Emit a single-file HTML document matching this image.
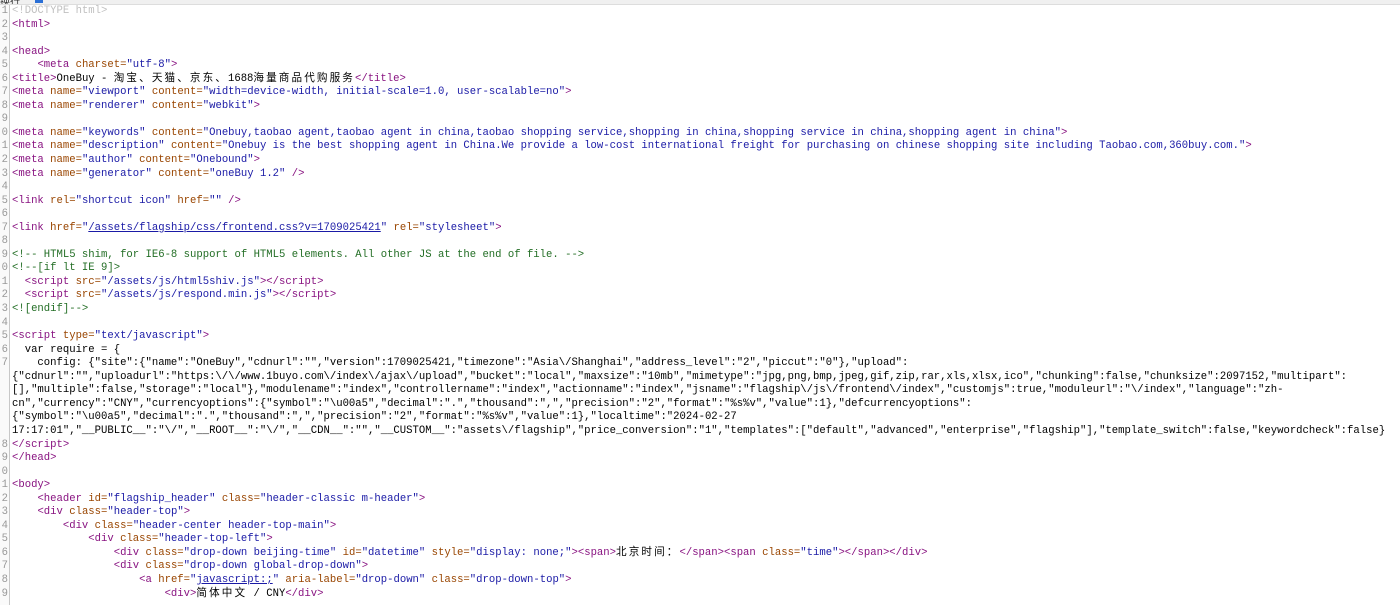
<!DOCTYPE html>
<html><head><meta charset="utf-8">
<style>
html,body{margin:0;padding:0;background:#fff;width:1400px;height:592px;overflow:hidden}
.top{position:absolute;left:0;top:0;width:1400px;height:4px;background:#f0f0f0;border-bottom:1px solid #ddd;overflow:hidden}
.top .tx{position:absolute;left:0;top:-7px;font:10px "Noto Sans CJK SC",sans-serif;color:#333}
.top .cb{position:absolute;left:35px;top:0;width:8px;height:3px;background:#2a6fd6}
.gut{position:absolute;left:0;top:5px;width:9px;height:600px;border-right:1px solid #c8c8c8;background:#fafafa}
.g{font:10.6px/13.55px "Liberation Mono",monospace;color:#999;text-align:right;width:8px;overflow:hidden;white-space:nowrap;direction:rtl}
pre{position:absolute;left:12px;top:5px;margin:0;font:10.6px/13.55px "Liberation Mono","Noto Sans CJK SC",monospace;color:#000;white-space:pre}
.t{color:#881280}.a{color:#994500}.v{color:#1a1aa6}.c{color:#236e25}.d{color:#c0c0c0}
.u{text-decoration:underline}
.cj{letter-spacing:2.1px}
</style></head><body>
<div class="top"><span class="tx">换行</span><span class="cb"></span></div>
<div class="gut"><div class="g">1<br>2<br>3<br>4<br>5<br>6<br>7<br>8<br>9<br>0<br>1<br>2<br>3<br>4<br>5<br>6<br>7<br>8<br>9<br>0<br>1<br>2<br>3<br>4<br>5<br>6<br>7<br><br><br><br><br><br>8<br>9<br>0<br>1<br>2<br>3<br>4<br>5<br>6<br>7<br>8<br>9</div></div>
<pre><span class="d">&lt;!DOCTYPE html&gt;</span>
<span class="t">&lt;html&gt;</span>

<span class="t">&lt;head&gt;</span>
    <span class="t">&lt;meta <span class="a">charset=</span><span class="v">"utf-8"</span>&gt;</span>
<span class="t">&lt;title&gt;</span>OneBuy - <span class="cj">淘宝、天猫、京东、</span>1688<span class="cj">海量商品代购服务</span><span class="t">&lt;/title&gt;</span>
<span class="t">&lt;meta <span class="a">name=</span><span class="v">"viewport"</span> <span class="a">content=</span><span class="v">"width=device-width, initial-scale=1.0, user-scalable=no"</span>&gt;</span>
<span class="t">&lt;meta <span class="a">name=</span><span class="v">"renderer"</span> <span class="a">content=</span><span class="v">"webkit"</span>&gt;</span>

<span class="t">&lt;meta <span class="a">name=</span><span class="v">"keywords"</span> <span class="a">content=</span><span class="v">"Onebuy,taobao agent,taobao agent in china,taobao shopping service,shopping in china,shopping service in china,shopping agent in china"</span>&gt;</span>
<span class="t">&lt;meta <span class="a">name=</span><span class="v">"description"</span> <span class="a">content=</span><span class="v">"Onebuy is the best shopping agent in China.We provide a low-cost international freight for purchasing on chinese shopping site including Taobao.com,360buy.com."</span>&gt;</span>
<span class="t">&lt;meta <span class="a">name=</span><span class="v">"author"</span> <span class="a">content=</span><span class="v">"Onebound"</span>&gt;</span>
<span class="t">&lt;meta <span class="a">name=</span><span class="v">"generator"</span> <span class="a">content=</span><span class="v">"oneBuy 1.2"</span> /&gt;</span>

<span class="t">&lt;link <span class="a">rel=</span><span class="v">"shortcut icon"</span> <span class="a">href=</span><span class="v">""</span> /&gt;</span>

<span class="t">&lt;link <span class="a">href=</span><span class="v">"<span class="u">/assets/flagship/css/frontend.css?v=1709025421</span>"</span> <span class="a">rel=</span><span class="v">"stylesheet"</span>&gt;</span>

<span class="c">&lt;!-- HTML5 shim, for IE6-8 support of HTML5 elements. All other JS at the end of file. --&gt;</span>
<span class="c">&lt;!--[if lt IE 9]&gt;</span>
  <span class="t">&lt;script <span class="a">src=</span><span class="v">"/assets/js/html5shiv.js"</span>&gt;&lt;/script&gt;</span>
  <span class="t">&lt;script <span class="a">src=</span><span class="v">"/assets/js/respond.min.js"</span>&gt;&lt;/script&gt;</span>
<span class="c">&lt;![endif]--&gt;</span>

<span class="t">&lt;script <span class="a">type=</span><span class="v">"text/javascript"</span>&gt;</span>
  var require = {
    config: {"site":{"name":"OneBuy","cdnurl":"","version":1709025421,"timezone":"Asia\/Shanghai","address_level":"2","piccut":"0"},"upload":
{"cdnurl":"","uploadurl":"https:\/\/www.1buyo.com\/index\/ajax\/upload","bucket":"local","maxsize":"10mb","mimetype":"jpg,png,bmp,jpeg,gif,zip,rar,xls,xlsx,ico","chunking":false,"chunksize":2097152,"multipart":
[],"multiple":false,"storage":"local"},"modulename":"index","controllername":"index","actionname":"index","jsname":"flagship\/js\/frontend\/index","customjs":true,"moduleurl":"\/index","language":"zh-
cn","currency":"CNY","currencyoptions":{"symbol":"\u00a5","decimal":".","thousand":",","precision":"2","format":"%s%v","value":1},"defcurrencyoptions":
{"symbol":"\u00a5","decimal":".","thousand":",","precision":"2","format":"%s%v","value":1},"localtime":"2024-02-27
17:17:01","__PUBLIC__":"\/","__ROOT__":"\/","__CDN__":"","__CUSTOM__":"assets\/flagship","price_conversion":"1","templates":["default","advanced","enterprise","flagship"],"template_switch":false,"keywordcheck":false}
<span class="t">&lt;/script&gt;</span>
<span class="t">&lt;/head&gt;</span>

<span class="t">&lt;body&gt;</span>
    <span class="t">&lt;header <span class="a">id=</span><span class="v">"flagship_header"</span> <span class="a">class=</span><span class="v">"header-classic m-header"</span>&gt;</span>
    <span class="t">&lt;div <span class="a">class=</span><span class="v">"header-top"</span>&gt;</span>
        <span class="t">&lt;div <span class="a">class=</span><span class="v">"header-center header-top-main"</span>&gt;</span>
            <span class="t">&lt;div <span class="a">class=</span><span class="v">"header-top-left"</span>&gt;</span>
                <span class="t">&lt;div <span class="a">class=</span><span class="v">"drop-down beijing-time"</span> <span class="a">id=</span><span class="v">"datetime"</span> <span class="a">style=</span><span class="v">"display: none;"</span>&gt;&lt;span&gt;</span><span class="cj">北京时间：</span><span class="t">&lt;/span&gt;&lt;span <span class="a">class=</span><span class="v">"time"</span>&gt;&lt;/span&gt;&lt;/div&gt;</span>
                <span class="t">&lt;div <span class="a">class=</span><span class="v">"drop-down global-drop-down"</span>&gt;</span>
                    <span class="t">&lt;a <span class="a">href=</span><span class="v">"<span class="u">javascript:;</span>"</span> <span class="a">aria-label=</span><span class="v">"drop-down"</span> <span class="a">class=</span><span class="v">"drop-down-top"</span>&gt;</span>
                        <span class="t">&lt;div&gt;</span><span class="cj">简体中文</span> / CNY<span class="t">&lt;/div&gt;</span>
</pre>
</body></html>
